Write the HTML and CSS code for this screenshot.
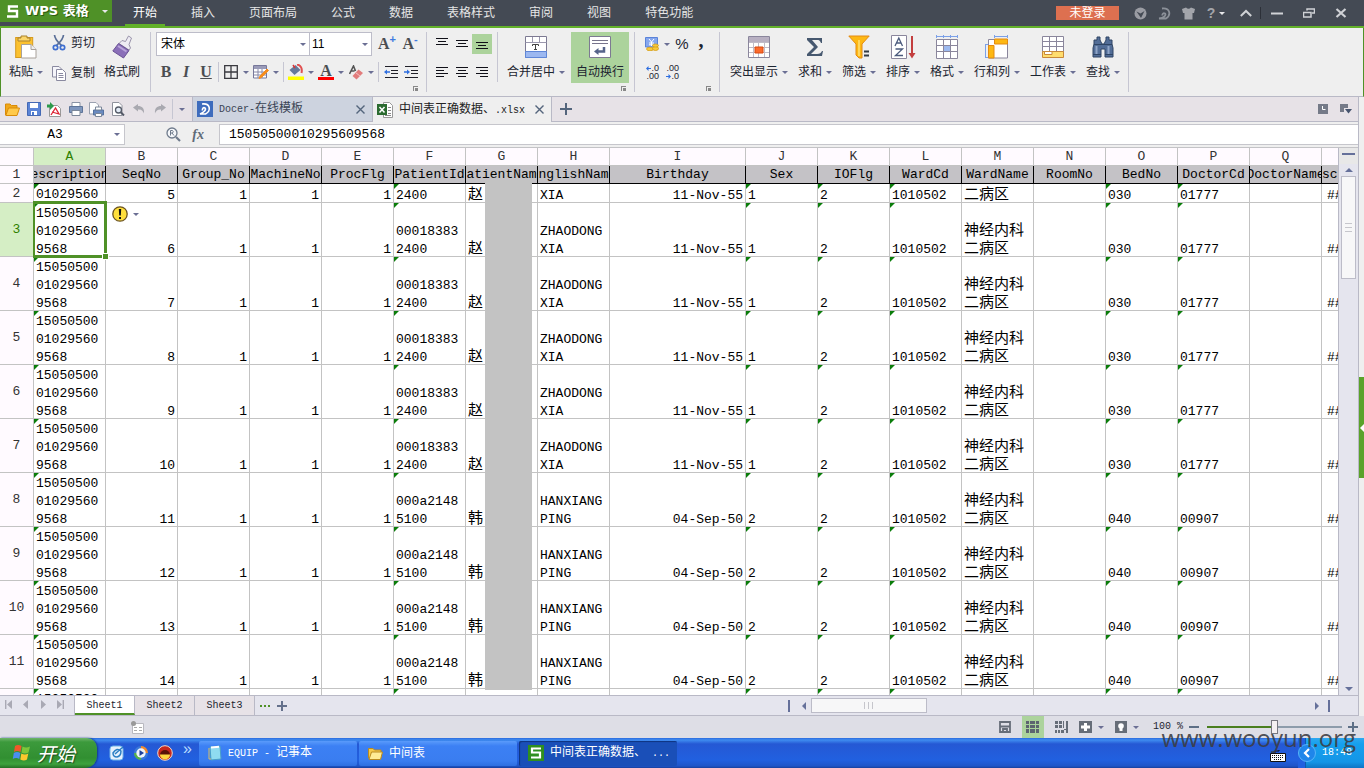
FILE: index.html
```html
<!DOCTYPE html>
<html lang="zh-CN">
<head>
<meta charset="utf-8">
<title>WPS 表格</title>
<link rel="stylesheet" href="styles.css">
</head>
<body>
<header class="titlebar">
  <button class="appbtn">
    <svg width="12" height="13" viewBox="0 0 12 13"><path d="M11 1.500H2V6H10V11.500H0" fill="none" stroke="#fff" stroke-width="2.400"/></svg>
    <span>WPS 表格</span><i class="arr light"></i>
  </button>
  <nav class="menu">
    <a href="#" class="on">开始</a><a href="#">插入</a><a href="#">页面布局</a><a href="#">公式</a><a href="#">数据</a><a href="#">表格样式</a><a href="#">审阅</a><a href="#">视图</a><a href="#">特色功能</a>
  </nav>
  <button class="login">未登录</button>
  <div class="winbtns">
    <button aria-label="云"><svg width="13" height="13" viewBox="0 0 13 13"><circle cx="6.500" cy="6.500" r="6" fill="#9a9ca3"/><path d="M2.500 4.500L6.500 6.500L10.500 4L7 11Z" fill="#444a54"/></svg></button>
    <button aria-label="Docer"><svg width="13" height="13" viewBox="0 0 13 13"><path d="M4 1.500C12 .5 13.500 8 8 11.500H1C6 11 8.500 8 7 6.500C5.500 5.500 4 7 4.500 8.500" fill="none" stroke="#8c9199" stroke-width="1.800"/></svg></button>
    <button aria-label="皮肤"><svg width="13" height="13" viewBox="0 0 13 13"><path d="M0 2L4 .5Q6.500 3 9 .5L13 2L12 6H10.500V12.500H2.500V6H1Z" fill="#a3a5ab"/></svg></button>
    <button aria-label="帮助" class="wide"><span class="q">?</span><i class="arr light"></i></button>
    <button aria-label="折叠功能区" class="mid"><svg width="12" height="8" viewBox="0 0 12 8"><path d="M.8 7L6 2L11.200 7" fill="none" stroke="#d0d2d6" stroke-width="2"/></svg></button>
    <i class="tsep"></i>
    <button aria-label="最小化" class="wide"><svg width="12" height="3" viewBox="0 0 12 3"><path d="M0 1.500H12" stroke="#d0d2d6" stroke-width="2"/></svg></button>
    <button aria-label="还原" class="wide"><svg width="12" height="10" viewBox="0 0 12 10"><path d="M4 2.500V1H11.500V5H9M.5 9V4.500H8V9Z" fill="none" stroke="#d0d2d6" stroke-width="1.500"/></svg></button>
    <button aria-label="关闭" class="wide"><svg width="12" height="10" viewBox="0 0 12 10"><path d="M1.500 1L10.500 9M10.500 1L1.500 9" stroke="#d0d2d6" stroke-width="2.200"/></svg></button>
  </div>
</header>

<section class="ribbon">
  <div class="group clip">
    <button class="big paste">
      <svg width="22" height="24" viewBox="0 0 22 24"><rect x=".7" y="2.500" width="17" height="20" fill="#fbc12f" stroke="#d59a1e"/><path d="M6 1h6v2h3v3H3V3h3z" fill="#fbd66b" stroke="#a9822f"/><path d="M6.500 9.500H16L21 14.500V23H6.500Z" fill="#fff" stroke="#a8a19a"/><path d="M16 9.500V14.500H21" fill="#eee" stroke="#a8a19a"/></svg>
      <span>粘贴<i class="arr"></i></span>
    </button>
    <div class="stack">
      <button><svg width="14" height="16" viewBox="0 0 14 16"><path d="M2.500 0C3 5 6 7 10 11M11.500 0C11 5 8 7 4 11" fill="none" stroke="#5a6f97" stroke-width="1.700"/><circle cx="3.500" cy="12.500" r="2.200" fill="none" stroke="#3f6fd0" stroke-width="1.700"/><circle cx="10.500" cy="12.500" r="2.200" fill="none" stroke="#3f6fd0" stroke-width="1.700"/></svg>剪切</button>
      <button><svg width="14" height="15" viewBox="0 0 14 15"><path d="M.5.5H7L9.500 3V11H.5Z" fill="#f5f5fa" stroke="#8a8aa0"/><path d="M4.500 3.500H10.500L13.500 6.500V14.500H4.500Z" fill="#fff" stroke="#8a8aa0"/><path d="M6.500 7.500H11M6.500 9.500H11.500M6.500 11.500H11.500" stroke="#8a8aa0"/></svg>复制</button>
    </div>
    <button class="big painter">
      <svg width="21" height="24" viewBox="0 0 21 24"><path d="M16.500 1L19.500 3L17 9.500L18.500 13L17 15L7 8.500L10 5.500L13.500 6.500Z" fill="#eeecf3" stroke="#9a94ab"/><path d="M6.500 8.500L17 15.500L11.500 23L.8 16Z" fill="#8a6fb8" stroke="#6a5294"/><path d="M6 11L14.500 16.500" stroke="#b9a5db" stroke-width="2"/></svg>
      <span>格式刷</span>
    </button>
  </div>
  <div class="group fontg">
    <div class="line tall">
      <label class="combo fam"><select aria-label="字体"><option>宋体</option></select></label>
      <label class="combo siz"><select aria-label="字号"><option>11</option></select></label>
      <button class="ib glyph inc">A<sup>+</sup></button><button class="ib glyph">A<sup>-</sup></button>
    </div>
    <div class="line">
      <button class="ib glyph">B</button><button class="ib glyph it">I</button><button class="ib glyph un">U</button><i class="s"></i>
      <button class="ib" aria-label="边框"><svg width="14" height="14" viewBox="0 0 14 14"><path d="M.7.7H13.300V13.300H.7ZM7 1V13M1 7H13" fill="none" stroke="#3a3a40" stroke-width="1.300"/></svg></button><button class="ab" aria-label="更多"><i class="arr"></i></button>
      <button class="ib" aria-label="绘图边框"><svg width="16" height="14" viewBox="0 0 16 14"><path d="M.5.5H13.500V13H.5Z" fill="#fff" stroke="#77789a"/><path d="M1 1H13V4H1Z" fill="#9a9bb8"/><path d="M1 7H13M1 10H13M5 4V13M9 4V13" stroke="#8889a8"/><path d="M14 4L15.500 5.500L8.500 12.500L6 13.500L7 11Z" fill="#f58d1e" stroke="#f58d1e"/></svg></button><button class="ab" aria-label="更多"><i class="arr"></i></button><i class="s"></i>
      <button class="ib" aria-label="填充颜色"><svg width="16" height="16" viewBox="0 0 16 16"><path d="M1.500 6L7.500 1L12.500 6L6.500 11Z" fill="#66799b"/><path d="M9 .5C13 1 14.500 5 13.500 9" fill="none" stroke="#e15050" stroke-width="2"/><path d="M5 1L7 4" stroke="#d33" stroke-width="1.500"/><path d="M0 12.500H16V16H0Z" fill="#ff0"/></svg></button><button class="ab" aria-label="更多"><i class="arr"></i></button>
      <button class="ib glyph fc">A</button><button class="ab" aria-label="更多"><i class="arr"></i></button>
      <button class="ib" aria-label="清除格式"><svg width="15" height="15" viewBox="0 0 15 15"><path d="M.5 9L4.500 1L6.500 6M2 6H5.500" fill="none" stroke="#555" stroke-width="1.600"/><path d="M9.500 4.500L14 8L7.500 14.500L3.500 11Z" fill="#e27c7c"/><path d="M6.500 7.500L11 11" stroke="#f6c0c0"/></svg></button><button class="ab" aria-label="更多"><i class="arr"></i></button><i class="s"></i>
      <button class="ib" aria-label="减少缩进"><svg width="14" height="14" viewBox="0 0 14 14"><path d="M1 1.500H14M7 5.500H14M7 8.500H14M1 12.500H14" stroke="#202028"/><path d="M0 7L3 4.500V6.300H6V7.700H3V9.500Z" fill="#2f6fe0"/></svg></button>
      <button class="ib" aria-label="增加缩进"><svg width="14" height="14" viewBox="0 0 14 14"><path d="M1 1.500H14M7 5.500H14M7 8.500H14M1 12.500H14" stroke="#202028"/><path d="M6 7L3 4.500V6.300H0V7.700H3V9.500Z" fill="#2f6fe0"/></svg></button>
    </div>
    <button class="launch" aria-label="字体设置"></button>
  </div>
  <div class="group aligng">
    <div class="line tall">
      <button class="ib" aria-label="顶端对齐"><svg width="12" height="12" viewBox="0 0 12 12"><path d="M0 .5H12M2 3.500H10M0 6.500H12" stroke="#101018"/></svg></button>
      <button class="ib" aria-label="垂直居中"><svg width="12" height="12" viewBox="0 0 12 12"><path d="M0 2.500H12M2 5.500H10M0 8.500H12" stroke="#101018"/></svg></button>
      <button class="ib sel" aria-label="底端对齐"><svg width="12" height="12" viewBox="0 0 12 12"><path d="M0 4.500H12M2 7.500H10M0 10.500H12" stroke="#101018"/></svg></button>
    </div>
    <div class="line">
      <button class="ib" aria-label="左对齐"><svg width="12" height="12" viewBox="0 0 12 12"><path d="M0 1.500H12M0 4.500H8M0 7.500H12M0 10.500H8" stroke="#101018"/></svg></button>
      <button class="ib" aria-label="居中"><svg width="12" height="12" viewBox="0 0 12 12"><path d="M0 1.500H12M2 4.500H10M0 7.500H12M2 10.500H10" stroke="#101018"/></svg></button>
      <button class="ib" aria-label="右对齐"><svg width="12" height="12" viewBox="0 0 12 12"><path d="M0 1.500H12M4 4.500H12M0 7.500H12M4 10.500H12" stroke="#101018"/></svg></button>
    </div>
  </div>
  <div class="group mergeg">
    <button class="big">
      <svg width="22" height="22" viewBox="0 0 22 22"><path d="M.5.5H21.500V21.500H.5Z" fill="#fff" stroke="#7d7a92"/><path d="M.5 6.500H21.500M7.500 1V6M14.500 1V6" stroke="#9b98ad"/><path d="M.5 15.500H21.500V21.500H.5Z" fill="#9cb8f0" stroke="#5f87d8"/><path d="M7.500 10V8.500H13.500V10M10.500 8.500V13.500M9 13.500H12" fill="none" stroke="#444"/></svg>
      <span>合并居中<i class="arr"></i></span>
    </button>
    <button class="big wrap">
      <svg width="22" height="22" viewBox="0 0 22 22"><path d="M.5.5H21.500V21.500H.5Z" fill="#fff" stroke="#7d7a92"/><path d="M3 4.500H19M3 7.500H19" stroke="#77748c"/><path d="M15 11V15.500H9" fill="none" stroke="#56648a" stroke-width="2.500"/><path d="M5 15.500L9.500 12V19Z" fill="#56648a"/></svg>
      <span>自动换行</span>
    </button>
    <button class="launch" aria-label="对齐设置"></button>
  </div>
  <div class="group numg">
    <div class="line tall">
      <button class="ib" aria-label="货币"><svg width="14" height="14" viewBox="0 0 14 14"><path d="M.5.5H12.500V10H.5Z" fill="#86a7ee" stroke="#5b83d8"/><path d="M4 2L6.500 5L9 2M6.500 5V9M4 6H9M4 7.800H9" fill="none" stroke="#fff"/><ellipse cx="5" cy="12" rx="3.500" ry="1.800" fill="#f8c83c" stroke="#d19a10" stroke-width=".7"/><ellipse cx="10.500" cy="11.500" rx="3" ry="2" fill="#f8c83c" stroke="#d19a10" stroke-width=".7"/><ellipse cx="10.500" cy="8.500" rx="3" ry="1.500" fill="#f8c83c" stroke="#d19a10" stroke-width=".7"/></svg></button><button class="ab" aria-label="更多"><i class="arr"></i></button>
      <button class="ib pct">%</button><button class="ib pct comma">,</button>
    </div>
    <div class="line dec">
      <button class="ib"><span><svg width="5" height="5" viewBox="0 0 5 5"><path d="M0 2.500L2.500 0V2H5V3H2.500V5Z" fill="#2f6fe0"/></svg>.0</span><span>.00</span></button>
      <button class="ib"><span>.00</span><span><svg width="5" height="5" viewBox="0 0 5 5"><path d="M5 2.500L2.500 0V2H0V3H2.500V5Z" fill="#2f6fe0"/></svg>.0</span></button>
    </div>
    <button class="launch" aria-label="数字设置"></button>
  </div>
  <div class="group tools">
    <button class="big"><svg width="22" height="22" viewBox="0 0 22 22"><path d="M.5.5H21.500V21.500H.5Z" fill="#fff" stroke="#8a869c"/><path d="M1 1H21V6H1Z" fill="#b8b0c2"/><path d="M1 6.500H21M1 11.500H21M1 16.500H21M5.500 7V21M10.500 7V21M16.500 7V21" stroke="#c0bcc8"/><path d="M7 11H15V17H7Z" fill="#fb6a2c" stroke="#d94b10"/></svg><span>突出显示<i class="arr"></i></span></button>
    <button class="big"><svg width="18" height="22" viewBox="0 0 18 22"><path d="M1 2H16V7H15C14 4.500 13 4 11 4H6L12 11L5 18H11C14 18 15 17 16 15H17L16 20H1V18L8 11L1 4Z" fill="#46586f"/></svg><span>求和<i class="arr"></i></span></button>
    <button class="big"><svg width="22" height="24" viewBox="0 0 22 24"><path d="M.8 1H21.200L14 9V23H11L8 20V9Z" fill="#fdb813" stroke="#e38a12"/><path d="M11 5V21" stroke="#ffd65c" stroke-width="2"/><path d="M16 16.500H21M16 20.500H21" stroke="#333b45" stroke-width="2"/></svg><span>筛选<i class="arr"></i></span></button>
    <button class="big"><svg width="25" height="24" viewBox="0 0 25 24"><path d="M.5.5H15.500V23.500H.5Z" fill="#fff" stroke="#8a869c"/><path d="M4 11L7.800 3L11.500 11M5.500 8H10M4.500 14H11.500L4.500 20.500H12" fill="none" stroke="#4b5b7d" stroke-width="1.300"/><path d="M21 1V20" stroke="#c33e3e" stroke-width="2"/><path d="M17.500 18H24.500L21 23.500Z" fill="#c33e3e"/></svg><span>排序<i class="arr"></i></span></button>
    <button class="big"><svg width="22" height="24" viewBox="0 0 22 24"><path d="M0 1.500H22M.5 0V3M7.500 0V3M14.500 0V3M21.500 0V3" stroke="#7ba0e8"/><path d="M.5 4.500H21.500V23.500H.5Z" fill="#fff" stroke="#8a869c"/><path d="M7 10H15V17H7Z" fill="#9dbaf0"/><path d="M1 10.500H21M1 16.500H21M7.500 5V23M14.500 5V23" stroke="#8a869c"/></svg><span>格式<i class="arr"></i></span></button>
    <button class="big"><svg width="24" height="24" viewBox="0 0 24 24"><path d="M9 1.500H23M9.500 0V3M22.500 0V3M.5 9V23M0 9.500H3M0 22.500H3" stroke="#7ba0e8"/><path d="M3.500 4.500H22.500V23H3.500Z" fill="#fff" stroke="#8a869c"/><path d="M9.500 4H22.500V9H9.500ZM3.500 10.500H9V23H3.500Z" fill="#fdb813" stroke="#e38a12"/></svg><span>行和列<i class="arr"></i></span></button>
    <button class="big"><svg width="22" height="22" viewBox="0 0 22 22"><path d="M.5.5H21.500V16H.5Z" fill="#fff" stroke="#8a869c"/><path d="M1 5.500H21M1 10.500H21M7.500 1V15M14.500 1V15" stroke="#8a869c"/><path d="M.5 15.500H21.500V21.500H.5Z" fill="#ffdd6e" stroke="#c8893a"/><path d="M2.500 15.500H10V18.500H2.500Z" fill="#fff" stroke="#c8893a"/></svg><span>工作表<i class="arr"></i></span></button>
    <button class="big"><svg width="22" height="22" viewBox="0 0 22 22"><path d="M5 1H8V4L10 8H12L14 4V1H17V4H20V8L21 12V21H13V13H9V21H1V12L2 8V4H5Z" fill="#526d97" stroke="#2f4565"/><path d="M2 8.500H20M1 18.500H9M13 18.500H21" stroke="#2f4565"/><path d="M4.500 10V18M16.500 10V18" stroke="#8fa5c8" stroke-width="2"/></svg><span>查找<i class="arr"></i></span></button>
  </div>
</section>

<div class="workspace">
<main class="work">
  <div class="docbar">
    <div class="quick">
      <button aria-label="打开"><svg width="15" height="13" viewBox="0 0 15 13"><path d="M.5 12V1H5L6.500 2.500H12V5" fill="#f0a81c" stroke="#d98b08"/><path d="M.8 12.500L3.500 5H14.500L12 12.500Z" fill="#ffc94a" stroke="#d98b08"/></svg></button>
      <button aria-label="保存"><svg width="14" height="14" viewBox="0 0 14 14"><path d="M.5.5H13.500V13.500H.5Z" fill="#5b84d6" stroke="#4468b4"/><path d="M3 1H11V6H3ZM4 9H10V13H4Z" fill="#fff"/><path d="M5 10H7V13H5Z" fill="#4a78d0"/></svg></button>
      <button aria-label="输出PDF"><svg width="15" height="15" viewBox="0 0 15 15"><path d="M2.500 3.500H10.500L13.500 6.500V14.500H2.500Z" fill="#fff" stroke="#999"/><path d="M4 13L8.500 6L12 12L5 10" fill="none" stroke="#d23" stroke-width="1.300"/><path d="M0 2.500H3V0L7 4L3 8V5.500H0Z" fill="#2c9a4a"/></svg></button>
      <button aria-label="打印"><svg width="14" height="14" viewBox="0 0 14 14"><path d="M3 .5H11V5H3Z" fill="#fff" stroke="#8a93a5"/><path d="M.5 4.500H13.500V10.500H.5Z" fill="#7f96bd" stroke="#5e7499"/><path d="M3 8.500H11V13.500H3Z" fill="#fff" stroke="#7b8799"/></svg></button>
      <button aria-label="快速打印"><svg width="15" height="15" viewBox="0 0 15 15"><path d="M.5.5H7L9.500 3V12H.5Z" fill="#fff" stroke="#9ba1b0"/><path d="M4.500 8H14.500V13H4.500Z" fill="#6a8ac0" stroke="#54719f"/><path d="M6.500 5H12.500V8H6.500ZM6.500 11.500H12.500V14.500H6.500Z" fill="#fff" stroke="#7b8799"/></svg></button>
      <button aria-label="打印预览"><svg width="14" height="14" viewBox="0 0 14 14"><path d="M1.500.5H8L11 3.500V13.500H1.500Z" fill="#fff" stroke="#8f929c"/><circle cx="7.500" cy="8" r="3" fill="#e4ecf6" stroke="#555b68" stroke-width="1.300"/><path d="M9.500 10L13 13.500" stroke="#555b68" stroke-width="2"/></svg></button>
      <button aria-label="撤消"><svg width="12" height="10" viewBox="0 0 12 10"><path d="M0 3.500L5 0V2C9 2 11.500 4 11 9.500C9.500 6 8 5.500 5 5.500V7.500Z" fill="#a9a9b0"/></svg></button>
      <button aria-label="恢复"><svg width="12" height="10" viewBox="0 0 12 10"><path d="M12 3.500L7 0V2C3 2 .5 4 1 9.500C2.500 6 4 5.500 7 5.500V7.500Z" fill="#a9a9b0"/></svg></button>
      <i class="s"></i><button class="more" aria-label="自定义"><i class="arr"></i></button>
    </div>
    <div class="doctab"><svg width="16" height="16" viewBox="0 0 16 16"><path d="M0 0H16V16H0Z" fill="#3d6cbd"/><path d="M5 3C14 2 14 10 8.500 13H3C7 11.500 9.500 8.500 8 7C6.500 6 5 7.500 5.500 9.500" fill="none" stroke="#fff" stroke-width="1.600"/></svg><a href="#"><span class="en">Docer-</span>在线模板</a><button class="x" aria-label="关闭"><svg width="9" height="9" viewBox="0 0 9 9"><path d="M.5.5L8.500 8.500M8.500.5L.5 8.500" stroke="#54657c" stroke-width="1.400"/></svg></button></div>
    <div class="doctab cur"><svg width="16" height="16" viewBox="0 0 16 16"><path d="M6.500.5H12.500L15.500 3.500V15.500H6.500Z" fill="#fff" stroke="#999"/><path d="M11 5.500H14M11 8.500H14M11 11.500H14M8 13.500H14" stroke="#888"/><path d="M0 2H10V13H0Z" fill="#2b6b30"/><path d="M2.500 5L7.500 10.500M7.500 5L2.500 10.500" stroke="#fff" stroke-width="1.500"/></svg><a href="#">中间表正确数据、<span class="en">.xlsx</span></a><button class="x" aria-label="关闭"><svg width="9" height="9" viewBox="0 0 9 9"><path d="M.5.5L8.500 8.500M8.500.5L.5 8.500" stroke="#54657c" stroke-width="1.400"/></svg></button></div>
    <button class="newdoc" aria-label="新建"><svg width="12" height="12" viewBox="0 0 12 12"><path d="M6 0V12M0 6H12" stroke="#54657c" stroke-width="2"/></svg></button>
    <div class="docright">
      <button aria-label="历史"><svg width="10" height="10" viewBox="0 0 10 10"><path d="M0 0H10V10H0Z" fill="#757a88"/><path d="M4.500 2V5.500H7.500" fill="none" stroke="#fff"/></svg></button>
      <button aria-label="窗口"><svg width="12" height="10" viewBox="0 0 12 10"><path d="M0 0H8V4H4V8H0Z" fill="#757a88"/><path d="M5 5H12L8.500 9.500Z" fill="#46546e"/></svg></button>
    </div>
  </div>

  <div class="formula">
    <label class="namebox"><input aria-label="名称框" value="A3"><i class="arr"></i></label>
    <div class="fx">
      <svg width="15" height="15" viewBox="0 0 15 15"><circle cx="6" cy="6" r="5" fill="#f5f7fa" stroke="#6f7b8c" stroke-width="1.300"/><path d="M4.500 8.500V3.500H6.500Q8 4.500 6.500 6H4.500M6 6L8 8.500" fill="none" stroke="#6f7b8c"/><path d="M10 10L14 14" stroke="#6f7b8c" stroke-width="2.200"/></svg>
      <em>fx</em>
    </div>
    <input class="fbox" aria-label="编辑栏" value="15050500010295609568">
  </div>

  <div class="sheetarea">
    <div class="gridwrap">
      <table class="grid">
        <colgroup id="cols"></colgroup>
        <thead id="head"></thead>
        <tbody id="body"></tbody>
      </table>
      <div class="mask"></div>
      <div class="activecell"></div>
      <button class="warn" aria-label="错误检查"><svg width="16" height="16" viewBox="0 0 16 16"><circle cx="8" cy="8" r="7.200" fill="#ffdf3c" stroke="#6b5320" stroke-width="1.300"/><path d="M6.800 3H9.200L8.800 9.500H7.200ZM7 11H9V13H7Z" fill="#111"/></svg><i class="arr"></i></button>
    </div>
    <div class="vscroll">
      <div class="split"></div><i class="tri up"></i>
      <div class="thumb"><i></i><i></i><i></i></div>
      <div class="fill"></div><i class="tri down"></i>
    </div>
  </div>

  <div class="sheetbar">
    <div class="navs">
      <button aria-label="第一个"><svg width="8" height="9" viewBox="0 0 8 9"><path d="M.7 0V9" stroke="#a9a9b4" stroke-width="1.400"/><path d="M7 0V9L2 4.500Z" fill="#a9a9b4"/></svg></button>
      <button aria-label="上一个"><svg width="8" height="9" viewBox="0 0 8 9"><path d="M6 0V9L1 4.500Z" fill="#a9a9b4"/></svg></button>
      <button aria-label="下一个"><svg width="8" height="9" viewBox="0 0 8 9"><path d="M2 0V9L7 4.500Z" fill="#a9a9b4"/></svg></button>
      <button aria-label="最后一个"><svg width="8" height="9" viewBox="0 0 8 9"><path d="M7.300 0V9" stroke="#a9a9b4" stroke-width="1.400"/><path d="M1 0V9L6 4.500Z" fill="#a9a9b4"/></svg></button>
    </div>
    <a href="#" class="sheet cur">Sheet1</a><a href="#" class="sheet">Sheet2</a><a href="#" class="sheet">Sheet3</a>
    <button class="dots" aria-label="更多工作表"><svg width="10" height="2" viewBox="0 0 10 2"><path d="M0 0H2V2H0ZM4 0H6V2H4ZM8 0H10V2H8Z" fill="#4f9127"/></svg></button>
    <button class="addsheet" aria-label="插入工作表"><svg width="10" height="10" viewBox="0 0 10 10"><path d="M5 0V10M0 5H10" stroke="#65718c" stroke-width="2"/></svg></button>
    <div class="hscroll">
      <i class="bar"></i><i class="tri left"></i>
      <div class="hthumb"><i></i><i></i><i></i></div>
      <div class="fill"></div><i class="tri right"></i><i class="bar"></i>
    </div>
  </div>
</main>
<aside class="side"><button class="handle" aria-label="展开任务窗格"><i class="tri"></i></button></aside>
</div>

<footer class="status">
  <svg class="rec" width="13" height="13" viewBox="0 0 13 13"><path d="M1.500 2.500H12.500V12.500H1.500Z" fill="#fff" stroke="#b9b9c0"/><path d="M3 6.500H6M8 6.500H11M3 9.500H6M8 9.500H11" stroke="#aaa"/><circle cx="2.500" cy="2.500" r="2.500" fill="#999"/></svg>
  <div class="views">
    <button aria-label="保存"><svg width="12" height="12" viewBox="0 0 12 12"><path d="M1 1H11V11H1ZM1 5.500H11M4 11V8H8V11" fill="none" stroke="#666d78" stroke-width="1.800"/></svg></button>
    <button class="sel" aria-label="普通视图"><svg width="13" height="12" viewBox="0 0 13 12"><path d="M0 0H13V12H0Z" fill="#5d6470"/><path d="M0 3.500H13M0 7.500H13M3.500 0V12M9.500 0V12" stroke="#a9d39a"/></svg></button>
    <button aria-label="分页预览"><svg width="13" height="12" viewBox="0 0 13 12"><path d="M0 0H3V3H0ZM4 0H7V3H4ZM0 4H3V7H0ZM4 4H7V7H4ZM8 0H9V7H8ZM11 0H13V12H11ZM0 9H2V12H0ZM3 9H5V12H3ZM6 9H9V12H6ZM9 8H13V9H9Z" fill="#666d78"/></svg></button>
    <button aria-label="阅读模式"><svg width="13" height="12" viewBox="0 0 13 12"><path d="M0 0H13V12H0Z" fill="#666d78"/><path d="M6.500 2V10M2 6H11" stroke="#fff" stroke-width="3"/></svg><i class="arr"></i></button>
    <button aria-label="护眼模式"><svg width="12" height="12" viewBox="0 0 12 12"><path d="M0 0H12V12H0Z" fill="#666d78"/><circle cx="6" cy="5" r="2.800" fill="#fff"/><path d="M4.500 7H7.500V10H4.500Z" fill="#fff"/></svg><i class="arr"></i></button>
  </div>
  <span class="zoom">100 %</span>
  <button class="zb" aria-label="缩小"><svg width="10" height="10" viewBox="0 0 10 10"><path d="M0 5H10" stroke="#5d6f86" stroke-width="2"/></svg></button>
  <input class="slider" type="range" aria-label="显示比例" min="0" max="100" value="50">
  <button class="zb" aria-label="放大"><svg width="10" height="10" viewBox="0 0 10 10"><path d="M5 0V10M0 5H10" stroke="#5d6f86" stroke-width="2"/></svg></button>
</footer>

<footer class="taskbar">
  <button class="start"><svg width="20" height="18" viewBox="0 0 20 18"><path d="M3 2Q6 0 9.500 2L8.500 8Q5 6 2 8Z" fill="#f0582a"/><path d="M10.500 2.500Q14 4.500 18 2.500L16.500 8.500Q13 10.500 9.500 8.500Z" fill="#7cc63a"/><path d="M1.800 9Q5 7 8.300 9L7.300 15Q4 13 .8 15Z" fill="#4a8ef0"/><path d="M9.300 9.500Q13 11.500 16.300 9.500L15 15.500Q12 17.500 8.300 15.500Z" fill="#fcc82e"/></svg><span>开始</span></button>
  <div class="launcher">
    <button aria-label="显示桌面"><svg width="16" height="16" viewBox="0 0 16 16"><rect x="1" y="1" width="13" height="14" rx="3" fill="#e6f2fd" stroke="#6fb3e8"/><path d="M4 8Q8 2 12 6Q12 11 8 12Q4 12 4 8ZM6 9L14 2" fill="none" stroke="#2a7fc4" stroke-width="1.500"/></svg></button>
    <button aria-label="播放器"><svg width="16" height="16" viewBox="0 0 16 16"><circle cx="8" cy="8" r="7" fill="#3a78d8"/><path d="M8 1A7 7 0 0 1 15 8H8Z" fill="#f08a2c"/><path d="M8 15A7 7 0 0 1 1 8H8Z" fill="#55b04a"/><circle cx="8" cy="8" r="4.700" fill="#eef4fc"/><path d="M6.500 5L11 8L6.500 11Z" fill="#1c3f9a"/></svg></button>
    <button aria-label="浏览器"><svg width="16" height="16" viewBox="0 0 16 16"><circle cx="8" cy="8" r="7.300" fill="#c6281e" stroke="#f3d9c8"/><path d="M3 10A5 5 0 0 1 13 10Z" fill="#5a1208"/><path d="M3 9.500H13A5 5 0 0 1 3 9.500Z" fill="#ffd83e"/></svg></button>
    <span>»</span>
  </div>
  <button class="task"><svg width="14" height="16" viewBox="0 0 14 16"><path d="M2 2L12 1L13 14L3 15Z" fill="#8fdcf0" stroke="#4aa0c8"/><path d="M3 2.500L11 1.800" stroke="#fff" stroke-width="2"/><path d="M1 3V14H3" fill="none" stroke="#d8c068"/></svg><span><span class="en">EQUIP - </span>记事本</span></button>
  <button class="task"><svg width="15" height="13" viewBox="0 0 15 13"><path d="M.5 11V1.500H5L6.500 3H13V11Z" fill="#f5c94a" stroke="#b98a20"/><path d="M1 12.500L3.500 5H14.500L12.500 12.500Z" fill="#ffeb94" stroke="#b98a20"/></svg><span>中间表</span></button>
  <button class="task cur"><svg width="16" height="16" viewBox="0 0 16 16"><path d="M0 0H16V16H0Z" fill="#2f8f1f"/><path d="M13 3.500H4V7.500H12V12.500H3" fill="none" stroke="#fff" stroke-width="2.200"/></svg><span>中间表正确数据、<span class="en"> ...</span></span></button>
  <svg class="kbd" width="16" height="12" viewBox="0 0 16 12"><path d="M5 3V1H9V0" fill="none" stroke="#111"/><path d="M.5 3.500H15.500V11.500H.5Z" fill="#fff" stroke="#111"/><path d="M2 5.500H14M2 7.500H14M4 9.500H12" stroke="#111" stroke-dasharray="1 1"/></svg>
  <div class="tray"><button class="expand" aria-label="显示图标"><svg width="18" height="18" viewBox="0 0 18 18"><circle cx="9" cy="9" r="8.500" fill="#1f86ea" stroke="#58b5f8"/><path d="M11 5L7 9L11 13" fill="none" stroke="#fff" stroke-width="2.200"/></svg></button><time class="en">18:48</time></div>
</footer>
<div class="watermark">www.wooyun.org</div>
<script src="grid.js"></script>
</body>
</html>
```

FILE: styles.css
```css
* { box-sizing: border-box; }
body {
  margin: 0; height: 100vh; overflow: hidden; position: relative;
  display: flex; flex-direction: column;
  background: #efefef; color: #1c2430;
  font: 12px/16px "Liberation Sans", "Noto Sans CJK SC", sans-serif;
}
button { border: 0; padding: 0; margin: 0; background: none; font: inherit; color: inherit; white-space: nowrap; display: flex; align-items: center; justify-content: center; }
a { color: inherit; text-decoration: none; }
input, select { font: inherit; color: inherit; border: 0; outline: 0; border-radius: 0; min-width: 0; }
svg { display: block; flex: none; }
.en { font-family: "Liberation Mono", monospace; font-size: 10px; white-space: pre; }
.arr { flex: none; width: 0; height: 0; border: 3px solid transparent; border-top-color: #6b6f94; border-bottom: 0; }
.arr.light { border-top-color: #e8e8ea; }
.s { flex: none; width: 1px; height: 20px; margin: 0 2px; background: #c6c6d2; }

.titlebar { flex: none; display: flex; align-items: flex-start; height: 28px; background: #444a54; border-bottom: 2px solid #62b129; color: #e6e6e6; }
.appbtn { width: 112px; height: 22px; padding: 0 4px 0 7px; gap: 6px; background: #4f9127; color: #fff; font: bold 13px/20px "DejaVu Sans", "Noto Sans CJK SC", sans-serif; justify-content: flex-start; }
.appbtn span { text-shadow: 1px 1px 0 #2c5c10; }
.appbtn .arr { margin-left: auto; }
.menu { display: flex; padding-left: 4px; }
.menu a { margin: 0 9px; padding: 0 8px; height: 26px; line-height: 26px; white-space: nowrap; }
.menu a.on { border-bottom: 2px solid #62b129; color: #fff; }
.login { width: 63px; height: 14px; margin: 6px 9px 0 auto; background: #dd7050; color: #fff; }
.winbtns { display: flex; align-items: center; height: 26px; padding-right: 7px; }
.winbtns button { width: 24px; height: 26px; gap: 4px; }
.winbtns .wide { width: 32px; }
.winbtns .mid { width: 28px; }
.q { font: bold 14px/16px "Liberation Sans", sans-serif; color: #a3a5ab; }
.tsep { width: 1px; height: 12px; background: #2c3038; }

.ribbon { flex: none; display: flex; height: 69px; padding-top: 4px; border-left: 1px solid #4f9127; border-right: 1px solid #4f9127; border-bottom: 1px solid #b9b9c6; }
.group { display: flex; height: 60px; position: relative; border-right: 1px solid #c6c6d2; flex: none; }
.big { flex-direction: column; height: 51px; justify-content: flex-end; }
.big > svg { margin: auto; }
.big > span { display: flex; align-items: center; gap: 4px; height: 22px; }
.clip { width: 150px; padding-left: 8px; gap: 9px; }
.paste { width: 34px; }
.stack { display: flex; flex-direction: column; gap: 8px; }
.stack button { height: 22px; gap: 5px; }
.painter { width: 36px; }
.fontg, .aligng, .numg { flex-direction: column; gap: 6px; }
.fontg { width: 276px; padding-left: 5px; }
.line { display: flex; align-items: center; height: 20px; }
.line.tall { height: 24px; }
.ib { width: 20px; height: 20px; flex: none; }
.ab { width: 10px; height: 20px; flex: none; }
.sel { background: #acd39c; }
.glyph { font: bold 16px/20px "Liberation Serif", serif; color: #4b4e52; }
.glyph sup { font: bold 11px/10px "Liberation Sans", sans-serif; color: #3f7be0; align-self: flex-start; }
.inc { margin: 0 3px 0 5px; }
.it { font-style: italic; }
.un { text-decoration: underline; }
.fc { height: 16px; border-bottom: 3px solid #f00; width: 16px; margin: 0 2px; line-height: 14px; }
.combo { position: relative; height: 24px; border: 1px solid #bdbdc9; background: #fff; }
.combo::after { content: ""; position: absolute; right: 3px; top: 10px; border: 3px solid transparent; border-top-color: #6b6f94; border-bottom: 0; }
.combo select { appearance: none; width: 100%; height: 22px; padding: 0 4px; background: transparent; color: #000; }
.fam { width: 154px; }
.siz { width: 62px; border-left: 0; }
.siz select { padding-left: 2px; }
.launch { position: absolute; right: 8px; bottom: 1px; width: 5px; height: 5px; border: 1px solid #888; border-right: 0; border-bottom: 0; }
.launch::after { content: ""; position: absolute; right: 0; bottom: 0; width: 3px; height: 3px; background: #888; }
.aligng { width: 71px; height: 50px; padding-left: 5px; }
.mergeg { width: 137px; padding-left: 9px; gap: 6px; }
.mergeg .big { width: 58px; }
.mergeg .wrap { background: #acd39c; }
.numg { width: 85px; padding-left: 7px; }
.pct { font: 15px/20px "Liberation Sans", sans-serif; margin-left: 1px; width: 18px; }
.comma { font: bold 20px/10px "Liberation Serif", serif; padding-bottom: 8px; }
.dec .ib { flex-direction: column; align-items: flex-end; padding-right: 3px; font: 9px/8px "Liberation Sans", sans-serif; }
.dec span { display: flex; align-items: center; }
.tools { padding: 0 0 0 10px; }
.tools .big { margin-right: 10px; }
.tools .big:last-child { margin-right: 8px; }

.workspace { flex: 1; min-height: 0; display: flex; }
.work { flex: 1; min-width: 0; display: flex; flex-direction: column; border-right: 1px solid #b9b9c6; }
.side { width: 5px; padding-top: 280px; background: #efefef; }
.handle { width: 5px; height: 101px; background: #5aa22a; }
.handle .tri { border-right-color: #fff; border-left: 0; }
.docbar { flex: none; display: flex; height: 25px; background: #e7e2e7; border-bottom: 1px solid #b9b9c6; }
.quick { display: flex; align-items: center; padding-left: 2px; width: 193px; border-right: 1px solid #b9b9c6; }
.quick button { width: 21px; height: 20px; flex: none; }
.quick .more { width: 14px; }
.doctab { display: flex; align-items: center; width: 180px; height: 24px; padding: 0 7px 0 4px; gap: 6px; background: #cdd3df; border-right: 1px solid #b9b9c6; color: #3a4454; }
.doctab a { flex: 1; white-space: nowrap; }
.doctab.cur { height: 25px; background: #efefef; color: #222; width: 179px; }
.newdoc { width: 28px; }
.docright { display: flex; margin-left: auto; gap: 12px; padding-right: 6px; }
.formula { flex: none; display: flex; height: 21px; margin: 2px 0; }
.namebox { display: flex; align-items: center; width: 125px; padding-right: 4px; background: #fff; border: 1px solid #c6c6cc; border-left: 0; }
.namebox input { flex: 1; height: 18px; padding: 0 4px 0 0; text-align: center; background: transparent; color: #000; font: 13px/18px "Liberation Mono", monospace; }
.fx { display: flex; align-items: center; justify-content: flex-end; gap: 11px; width: 94px; padding-right: 15px; }
.fx em { font: italic bold 14px/18px "Liberation Serif", serif; color: #5f6a78; }
.fbox { flex: 1; padding: 0 9px; background: #fff; border: 1px solid #c6c6cc; border-right: 0; color: #000; font: 13px/18px "Liberation Mono", monospace; }

.sheetarea { flex: 1; min-height: 0; display: flex; border-top: 1px solid #c3c3c6; }
.gridwrap { flex: 1; min-width: 0; position: relative; overflow: hidden; background: #fff; }
.grid { table-layout: fixed; border-collapse: separate; border-spacing: 0; width: 1394px; color: #000; font: 13px/18px "Liberation Mono", "Noto Sans CJK SC", monospace; }
.c-head { width: 34px; }
.c { width: 72px; }
.c-wide { width: 136px; }
.grid td, .grid th { padding: 0; font-weight: normal; border-right: 1px solid #c3c3c3; border-bottom: 1px solid #c3c3c3; }
.grid th { background: #fffaff; color: #333; text-align: center; vertical-align: middle; line-height: 17px; }
.grid thead th { height: 18px; }
.grid th.hot { background: #d5eec5; color: #2f8000; }
.cell { height: 53px; overflow: hidden; display: flex; flex-direction: column; justify-content: flex-end; padding: 0 2px; word-break: break-all; }
.cell > div { margin-bottom: -3px; }
.cell.full { justify-content: flex-start; padding-top: 2px; }
.cell.r { text-align: right; }
.cell.zh { font-size: 15px; }
.cell.hash { padding-left: 5px; white-space: nowrap; }
.short .cell { height: 18px; }
.flag { background: linear-gradient(135deg, #0a7d0a 3px, transparent 4px); }
.names .cell { height: 17px; flex-direction: row; justify-content: center; white-space: nowrap; padding: 0; }
.names .cell.cut { justify-content: flex-start; }
.names td { background: #c4c2c6; border-right-color: #000; border-bottom-color: #000; }
.mask { position: absolute; left: 485px; top: 32px; width: 47px; height: 510px; background: #c3c3c3; }
.activecell { position: absolute; left: 33px; top: 53px; width: 74px; height: 57px; border: 3px solid #4f9127; border-left-width: 2px; }
.activecell::after { content: ""; position: absolute; right: -4px; bottom: -4px; width: 5px; height: 5px; background: #4f9127; outline: 1px solid #fff; }
.warn { position: absolute; left: 112px; top: 58px; gap: 5px; }

.tri { flex: none; width: 0; height: 0; border: 4px solid transparent; }
.tri.up { border-bottom-color: #65709a; border-top: 0; }
.tri.down { border-top-color: #65709a; border-bottom: 0; }
.tri.left { border-right-color: #65709a; border-left: 0; }
.tri.right { border-left-color: #65709a; border-right: 0; }
.fill { flex: 1; }
.vscroll { flex: none; width: 20px; display: flex; flex-direction: column; align-items: center; background: #e5e5ee; border-left: 1px solid #b9b9c6; padding-bottom: 4px; }
.split { width: 100%; height: 16px; margin-bottom: 4px; background: #e8e8e8; padding: 5px 3px; }
.split::after { content: ""; display: block; height: 2px; background: #65709a; }
.thumb { display: flex; flex-direction: column; align-items: center; justify-content: center; gap: 3px; width: 15px; height: 103px; margin-top: 4px; background: #f7f7f8; border: 1px solid #bcbcc8; }
.thumb i { width: 7px; height: 1px; background: #c6c6cc; }
.sheetbar { flex: none; display: flex; height: 21px; background: #e5e5ee; border-top: 1px solid #b9b9c6; border-bottom: 1px solid #b9b9c6; }
.navs { display: flex; width: 75px; border-right: 1px solid #b9b9c6; }
.navs button { width: 17px; height: 17px; }
.sheet { width: 60px; height: 19px; text-align: center; font: 10px/20px "Liberation Mono", monospace; background: #e7e2e7; border-right: 1px solid #b9b9c6; }
.sheet.cur { background: #fff; border-bottom: 2px solid #4f9127; }
.dots { width: 20px; }
.addsheet { width: 14px; }
.hscroll { display: flex; align-items: center; margin-left: auto; width: 42%; padding-right: 28px; }
.bar { width: 2px; height: 12px; background: #65709a; }
.hscroll .left { margin: 0 5px 0 12px; }
.hscroll .right { margin-right: 9px; }
.hthumb { display: flex; align-items: center; justify-content: center; gap: 3px; width: 116px; height: 15px; background: #f7f7f8; border: 1px solid #bcbcc8; }
.hthumb i { width: 1px; height: 7px; background: #c6c6cc; }

.status { flex: none; display: flex; align-items: center; height: 22px; background: #dedee6; padding-right: 6px; }
.rec { margin-left: 131px; }
.views { display: flex; align-items: center; height: 22px; margin-left: auto; gap: 11px; }
.views button { height: 22px; gap: 6px; }
.views .sel { width: 22px; }
.zoom { margin: 0 6px 0 14px; font: 10px/16px "Liberation Mono", monospace; }
.slider { appearance: none; width: 135px; height: 14px; margin: 0 6px 0 8px; background: linear-gradient(90deg, #4a7f1f 50%, #8d9cab 50%) center / 100% 2px no-repeat; }
.slider::-webkit-slider-thumb { appearance: none; width: 7px; height: 14px; background: #f4f0f2; border: 1px solid #77777f; }

.taskbar { flex: none; display: flex; align-items: center; height: 30px; color: #fff; background: linear-gradient(#2a6ade 0, #3f8cf0 2px, #2558d4 6px, #2160e0 22px, #1f55c8 28px, #173f9c 30px); }
.start { width: 97px; height: 30px; gap: 5px; padding-right: 10px; border-radius: 0 10px 12px 0; background: linear-gradient(#6fb56a 0, #3c9a3c 4px, #318f31 20px, #3da23d 26px, #247024 30px); font: italic 19px/28px "Noto Sans CJK SC", sans-serif; text-shadow: 1px 1px 1px #1d4d1d; box-shadow: 1px 0 2px #123a8a; }
.launcher { display: flex; align-items: center; gap: 8px; width: 102px; padding-left: 12px; font-size: 16px; }
.launcher span { margin-left: 2px; color: #b8dcff; padding-bottom: 8px; }
.task { width: 158px; height: 25px; margin-right: 2px; padding: 0 9px; gap: 6px; justify-content: flex-start; border-radius: 2px; background: linear-gradient(#5a9bfb, #3c80f4 5px, #3a7df0 20px, #2f6fe0); }
.task.cur { background: #1a4fb8; box-shadow: inset 1px 1px 1px #0f3480; }
.kbd { margin: 6px 12px 0 auto; }
.tray { display: flex; align-items: center; height: 30px; width: 66px; gap: 6px; background: linear-gradient(90deg, #2160e0 7px, #0d5bb0 7px, #0d5bb0 8px, transparent 8px), linear-gradient(#2fa8f0, #16a0ee 6px, #1495e6 24px, #0f74c4); }
.watermark { position: absolute; right: 8px; bottom: 14px; font: 24px/32px "Open Sans", sans-serif; color: rgba(60, 60, 66, .9); pointer-events: none; }
```

FILE: grid.js
```js
const letters = "ABCDEFGHIJKLMNOPQR".split("");
const names = ["escription", "SeqNo", "Group_No", "MachineNo", "ProcFlg", "PatientId", "PatientName", "EnglishName", "Birthday", "Sex", "IOFlg", "WardCd", "WardName", "RoomNo", "BedNo", "DoctorCd", "DoctorName", "scription"];
const flagged = "AFJKLOP";
const rightAligned = "BCDEI";

const first = { id: "00018383<br>2400", name: "赵", en: "ZHAODONG<br>XIA", birth: "11-Nov-55", sex: "1", bed: "030", doc: "01777" };
const second = { id: "000a2148<br>5100", name: "韩", en: "HANXIANG<br>PING", birth: "04-Sep-50", sex: "2", bed: "040", doc: "00907" };

function values(p, seq) {
  return ["15050500<br>01029560<br>9568", seq, 1, 1, 1, p.id, p.name, p.en, p.birth, p.sex, "2", "1010502", "神经内科<br>二病区", "", p.bed, p.doc, "", "########"];
}

function cell(v, i) {
  const l = letters[i];
  let c = "cell";
  if (rightAligned.includes(l)) c += " r";
  if (l === "A") c += " full";
  if (l === "G" || l === "M") c += " zh";
  if (l === "R") c += " hash";
  return `<td${flagged.includes(l) ? ' class="flag"' : ""}><div class="${c}"><div>${v}</div></div></td>`;
}

document.getElementById("cols").innerHTML = '<col class="c-head">' + letters.map(l => `<col class="${l === "I" ? "c-wide" : "c"}">`).join("");
document.getElementById("head").innerHTML = "<tr><th></th>" + letters.map(l => `<th${l === "A" ? ' class="hot"' : ""}>${l}</th>`).join("") + "</tr>";

let html = '<tr class="names"><th>1</th>' + names.map((n, i) => `<td><div class="cell${i === 17 ? " cut" : ""}"><span>${n}</span></div></td>`).join("") + "</tr>";
const top2 = values(first, 5);
top2[0] = "01029560";
top2[5] = "2400";
top2[7] = "XIA";
top2[12] = "二病区";
html += '<tr class="short"><th>2</th>' + top2.map(cell).join("") + "</tr>";
for (let n = 3; n <= 12; n++) {
  html += `<tr><th${n === 3 ? ' class="hot"' : ""}>${n}</th>` + values(n < 8 ? first : second, n + 3).map(cell).join("") + "</tr>";
}
document.getElementById("body").innerHTML = html;
```
